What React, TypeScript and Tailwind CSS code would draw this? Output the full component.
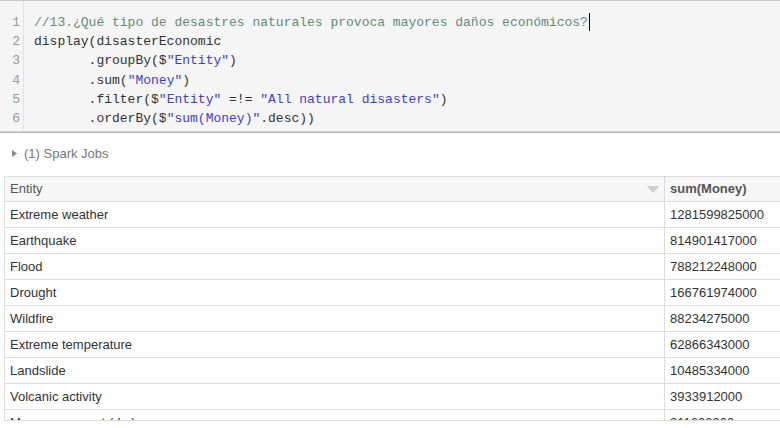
import React from "react";

const mono = { fontFamily: '"Liberation Mono", "DejaVu Sans Mono", monospace' };
const sans = { fontFamily: '"Liberation Sans", Arial, sans-serif' };

const C = ({ children }: { children: React.ReactNode }) => <span className="text-[#333]">{children}</span>;
const S = ({ children }: { children: React.ReactNode }) => <span className="text-[#3f3fc4]">{children}</span>;

const rows: [string, string][] = [
  ["Extreme weather", "1281599825000"],
  ["Earthquake", "814901417000"],
  ["Flood", "788212248000"],
  ["Drought", "166761974000"],
  ["Wildfire", "88234275000"],
  ["Extreme temperature", "62866343000"],
  ["Landslide", "10485334000"],
  ["Volcanic activity", "3933912000"],
  ["Mass movement (dry)", "211600000"],
];

export default function App() {
  const lines: React.ReactNode[] = [
    <span className="text-[#5f8c78]">
      //13.¿Qué tipo de desastres naturales provoca mayores daños económicos?
      <span className="inline-block w-px h-[18px] bg-black align-middle ml-px -mt-[2px]" />
    </span>,
    <C>display(disasterEconomic</C>,
    <>
      <C>{"       .groupBy($"}</C>
      <S>"Entity"</S>
      <C>)</C>
    </>,
    <>
      <C>{"       .sum("}</C>
      <S>"Money"</S>
      <C>)</C>
    </>,
    <>
      <C>{"       .filter($"}</C>
      <S>"Entity"</S>
      <C>{" =!= "}</C>
      <S>"All natural disasters"</S>
      <C>)</C>
    </>,
    <>
      <C>{"       .orderBy($"}</C>
      <S>"sum(Money)"</S>
      <C>.desc))</C>
    </>,
  ];

  return (
    <div className="w-[780px] h-[428px] overflow-hidden bg-white" style={sans}>
      {/* code cell */}
      <div className="border-t border-[#c8c8c8] bg-[#f5f5f5] border-b border-b-[#d6d6d6] shadow-[0_1px_0_#b4b4b4]">
        <div className="flex h-[130px]">
          <div className="w-[24px] border-r border-[#e2e2e2] pt-[12px] text-right pr-[3px] text-[#999] text-[13px] leading-[19.2px]" style={mono}>
            {lines.map((_, i) => (
              <div key={i}>{i + 1}</div>
            ))}
          </div>
          <div className="pl-[10px] pt-[12px] text-[13px] leading-[19.2px] whitespace-pre" style={mono}>
            {lines.map((l, i) => (
              <div key={i}>{l}</div>
            ))}
          </div>
        </div>
      </div>

      {/* spark jobs */}
      <div className="h-[44px] flex items-center pl-[12px] pb-[1px] text-[13px] text-[#777]">
        <svg width="5" height="7" viewBox="0 0 5 7" className="mr-[7px]">
          <polygon points="0,0 5,3.5 0,7" fill="#888" />
        </svg>
        (1) Spark Jobs
      </div>

      {/* table */}
      <div className="ml-[4px] h-[245px] overflow-hidden border-l border-t border-b border-[#dcdcdc] text-[13px]">
        <div className="flex h-[25px] bg-[#f7f7f7] border-b border-[#dcdcdc] items-center">
          <div className="w-[660px] flex items-center justify-between pl-[5px] pr-[5px] text-[#555] h-full border-r border-[#dcdcdc]">
            <span>Entity</span>
            <svg width="12" height="7" viewBox="0 0 12 7">
              <polygon points="0,0 12,0 6,7" fill="#cfcfcf" />
            </svg>
          </div>
          <div className="pl-[5px] font-bold text-[#555]">sum(Money)</div>
        </div>
        {rows.map(([e, v]) => (
          <div key={e} className="flex h-[26px] items-center border-b border-[#dcdcdc] text-[#333]">
            <div className="w-[660px] pl-[5px] h-full flex items-center border-r border-[#dcdcdc]">{e}</div>
            <div className="pl-[5px]">{v}</div>
          </div>
        ))}
      </div>
    </div>
  );
}
